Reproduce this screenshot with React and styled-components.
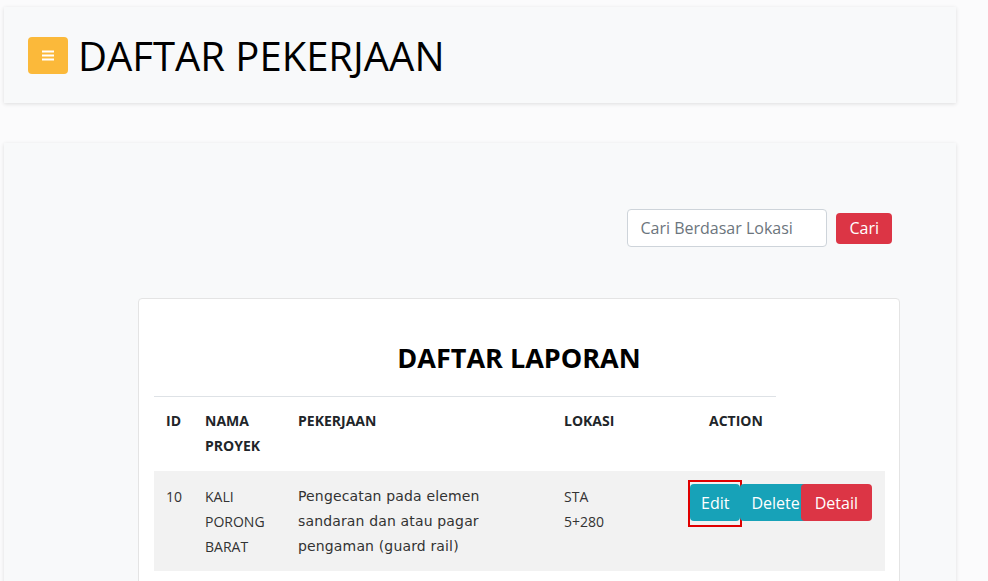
import styled, { createGlobalStyle } from "styled-components";

const GlobalStyle = createGlobalStyle`
  html, body {
    margin: 0;
    padding: 0;
    background: #fbfbfc;
    font-family: "Open Sans", "Liberation Sans", sans-serif;
    color: #212529;
  }
  * { box-sizing: border-box; }
`;

const rows = [
  {
    id: 10,
    proyek: ["KALI", "PORONG", "BARAT"],
    pekerjaan: "Pengecatan pada elemen sandaran dan atau pagar pengaman (guard rail)",
    lokasi: ["STA", "5+280"],
  },
];

function MenuIcon() {
  return (
    <svg width="12" height="11" viewBox="0 0 12 11">
      <rect x="0" y="0.5" width="12" height="2" fill="#fff" />
      <rect x="0" y="4.5" width="12" height="2" fill="#fff" />
      <rect x="0" y="8.5" width="12" height="2" fill="#fff" />
    </svg>
  );
}

export default function App() {
  return (
    <Page>
      <GlobalStyle />
      <HeaderCard>
        <MenuButton>
          <MenuIcon />
        </MenuButton>
        <PageTitle>DAFTAR PEKERJAAN</PageTitle>
      </HeaderCard>

      <ContentCard>
        <SearchRow>
          <SearchInput placeholder="Cari Berdasar Lokasi" />
          <Button $color="#dc3545" $small>
            Cari
          </Button>
        </SearchRow>

        <TableCard>
          <TableTitle>DAFTAR LAPORAN</TableTitle>
          <Table>
            <colgroup>
              <col style={{ width: 39 }} />
              <col style={{ width: 93 }} />
              <col style={{ width: 266 }} />
              <col style={{ width: 126 }} />
              <col style={{ width: 98 }} />
              <col style={{ width: 109 }} />
            </colgroup>
            <thead>
              <tr>
                <Th>ID</Th>
                <Th>NAMA PROYEK</Th>
                <Th>PEKERJAAN</Th>
                <Th>LOKASI</Th>
                <Th $action>ACTION</Th>
                <EmptyTh />
              </tr>
            </thead>
            <tbody>
              {rows.map((r) => (
                <Row key={r.id}>
                  <Td>{r.id}</Td>
                  <Td>
                    {r.proyek.map((p) => (
                      <div key={p}>{p}</div>
                    ))}
                  </Td>
                  <Td $text>{r.pekerjaan}</Td>
                  <Td>
                    {r.lokasi.map((l) => (
                      <div key={l}>{l}</div>
                    ))}
                  </Td>
                  <ActionTd colSpan={2}>
                    <Actions>
                      <Marked>
                        <Button $color="#17a2b8">Edit</Button>
                      </Marked>
                      <Button $color="#17a2b8">Delete</Button>
                      <Button $color="#dc3545" $overlap>
                        Detail
                      </Button>
                    </Actions>
                  </ActionTd>
                </Row>
              ))}
            </tbody>
          </Table>
        </TableCard>
      </ContentCard>
    </Page>
  );
}

const Page = styled.div`
  padding: 7px 32px 0 4px;
  height: 581px;
  overflow: hidden;
`;

const HeaderCard = styled.div`
  display: flex;
  align-items: center;
  gap: 10px;
  height: 96px;
  padding: 0 24px;
  background: #f8f9fa;
  box-shadow: 0 1px 4px rgba(0, 0, 0, 0.12);
`;

const MenuButton = styled.div`
  display: flex;
  align-items: center;
  justify-content: center;
  width: 40px;
  height: 37px;
  border-radius: 4px;
  background: #fbb93a;
`;

const PageTitle = styled.h1`
  margin: 0;
  font-size: 40px;
  font-weight: 400;
  color: #000;
`;

const ContentCard = styled.div`
  margin-top: 40px;
  padding: 66px 56px 0 134px;
  height: 460px;
  background: #f8f9fa;
  box-shadow: 0 1px 4px rgba(0, 0, 0, 0.12);
`;

const SearchRow = styled.div`
  display: flex;
  align-items: center;
  justify-content: flex-end;
  gap: 9px;
  padding-right: 8px;
`;

const SearchInput = styled.input`
  width: 200px;
  height: 38px;
  padding: 6px 12px;
  border: 1px solid #ced4da;
  border-radius: 4px;
  background: #fff;
  font-family: inherit;
  font-size: 16px;
  outline: none;
  &::placeholder {
    color: #6c757d;
  }
`;

const Button = styled.button`
  position: relative;
  z-index: ${(p) => (p.$overlap ? 1 : 0)};
  margin-left: ${(p) => (p.$overlap ? "-10px" : "0")};
  height: ${(p) => (p.$small ? "31px" : "37px")};
  padding: 0 ${(p) => (p.$small ? "13px" : p.$overlap ? "14px" : "11px")};
  border: none;
  border-radius: 4px;
  background: ${(p) => p.$color};
  color: #fff;
  font-family: inherit;
  font-size: 16px;
  line-height: 20px;
  cursor: pointer;
`;

const TableCard = styled.div`
  margin-top: 51px;
  padding: 37px 15px 0;
  height: 300px;
  background: #fff;
  border: 1px solid #e4e4e4;
  border-radius: 4px;
`;

const TableTitle = styled.h2`
  margin: 0 0 16px;
  text-align: center;
  font-size: 27px;
  font-weight: 700;
  color: #000;
  line-height: 44px;
`;

const Table = styled.table`
  width: 731px;
  table-layout: fixed;
  border-collapse: collapse;
  font-size: 14px;
  line-height: 25px;
`;

const Th = styled.th`
  padding: 11px 12px 13px ${(p) => (p.$action ? "31px" : "12px")};
  border-top: 1px solid #dee2e6;
  text-align: left;
  vertical-align: top;
  font-weight: 700;
  color: #212529;
`;

const EmptyTh = styled.th`
  border: none;
`;

const Row = styled.tr`
  background: #f2f2f2;
`;

const Td = styled.td`
  padding: 13px 12px 12px;
  vertical-align: top;
  color: #333;
  font-family: ${(p) => (p.$text ? '"DejaVu Sans", "Open Sans", sans-serif' : "inherit")};
  font-size: 14px;
  letter-spacing: ${(p) => (p.$text ? "0.15px" : "0")};
`;

const ActionTd = styled.td`
  padding: 13px 12px;
  vertical-align: top;
`;

const Actions = styled.div`
  display: flex;
  align-items: flex-start;
`;

const Marked = styled.span`
  position: relative;
  display: inline-flex;
  &::after {
    content: "";
    position: absolute;
    top: -4px;
    left: -2px;
    right: -2px;
    bottom: -6px;
    border: 2px solid #e00000;
    pointer-events: none;
  }
`;
